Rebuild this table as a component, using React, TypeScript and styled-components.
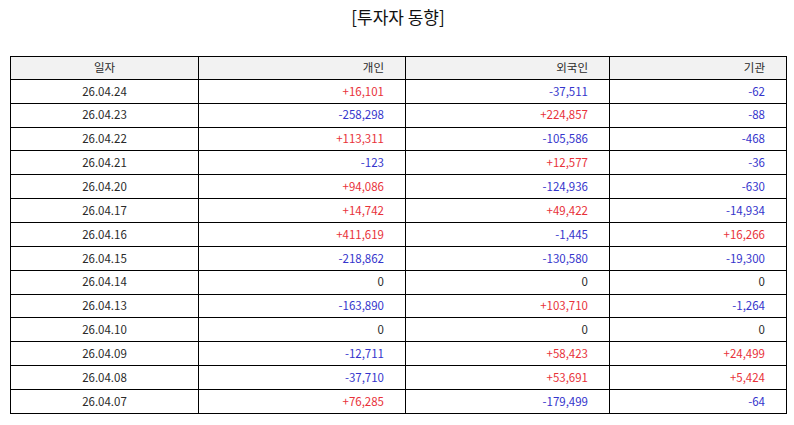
import React from "react";
import styled, { createGlobalStyle } from "styled-components";

const Global = createGlobalStyle`
  html, body { margin: 0; padding: 0; background: #fff; }
  body { font-family: "Noto Sans CJK KR", "Noto Sans", sans-serif; }
`;

const Page = styled.div`
  width: 794px;
  height: 425px;
  padding: 0 8px 0 10px;
  box-sizing: border-box;
  display: flex;
  flex-direction: column;
`;

const Title = styled.h1`
  margin: 0;
  height: 56px;
  padding-top: 5px;
  box-sizing: border-box;
  text-align: center;
  font-size: 17px;
  font-weight: 400;
  color: #111;
  line-height: 24px;
`;

const Table = styled.table`
  width: 776px;
  border-collapse: collapse;
  table-layout: fixed;
  font-size: 11.5px;
  color: #2a2a2a;
`;

const Th = styled.th<{ $align: "center" | "right" }>`
  border: 1px solid #000;
  background: #f2f2f2;
  font-weight: 400;
  height: 22.86px;
  padding: 0 ${(p) => (p.$align === "right" ? "21px" : "0")} 0 0;
  text-align: ${(p) => p.$align};
  line-height: 1;
  box-sizing: border-box;
`;

const Td = styled.td<{ $align: "center" | "right"; $tone?: "up" | "down" | "flat" }>`
  border: 1px solid #000;
  height: 22.86px;
  padding: 0 ${(p) => (p.$align === "right" ? "21px" : "0")} 0 0;
  text-align: ${(p) => p.$align};
  line-height: 1;
  color: ${(p) => (p.$tone === "up" ? "#e8323a" : p.$tone === "down" ? "#3535cc" : "#2a2a2a")};
`;

const rows: [string, string, string, string][] = [
  ["26.04.24", "+16,101", "-37,511", "-62"],
  ["26.04.23", "-258,298", "+224,857", "-88"],
  ["26.04.22", "+113,311", "-105,586", "-468"],
  ["26.04.21", "-123", "+12,577", "-36"],
  ["26.04.20", "+94,086", "-124,936", "-630"],
  ["26.04.17", "+14,742", "+49,422", "-14,934"],
  ["26.04.16", "+411,619", "-1,445", "+16,266"],
  ["26.04.15", "-218,862", "-130,580", "-19,300"],
  ["26.04.14", "0", "0", "0"],
  ["26.04.13", "-163,890", "+103,710", "-1,264"],
  ["26.04.10", "0", "0", "0"],
  ["26.04.09", "-12,711", "+58,423", "+24,499"],
  ["26.04.08", "-37,710", "+53,691", "+5,424"],
  ["26.04.07", "+76,285", "-179,499", "-64"],
];

const tone = (v: string): "up" | "down" | "flat" =>
  v.startsWith("+") ? "up" : v.startsWith("-") ? "down" : "flat";

export default function App() {
  return (
    <Page>
      <Global />
      <Title>[투자자 동향]</Title>
      <Table>
        <colgroup>
          <col style={{ width: 188 }} />
          <col style={{ width: 207 }} />
          <col style={{ width: 204 }} />
          <col style={{ width: 177 }} />
        </colgroup>
        <thead>
          <tr>
            <Th $align="center">일자</Th>
            <Th $align="right">개인</Th>
            <Th $align="right">외국인</Th>
            <Th $align="right">기관</Th>
          </tr>
        </thead>
        <tbody>
          {rows.map((r) => (
            <tr key={r[0]}>
              <Td $align="center">{r[0]}</Td>
              <Td $align="right" $tone={tone(r[1])}>{r[1]}</Td>
              <Td $align="right" $tone={tone(r[2])}>{r[2]}</Td>
              <Td $align="right" $tone={tone(r[3])}>{r[3]}</Td>
            </tr>
          ))}
        </tbody>
      </Table>
    </Page>
  );
}
